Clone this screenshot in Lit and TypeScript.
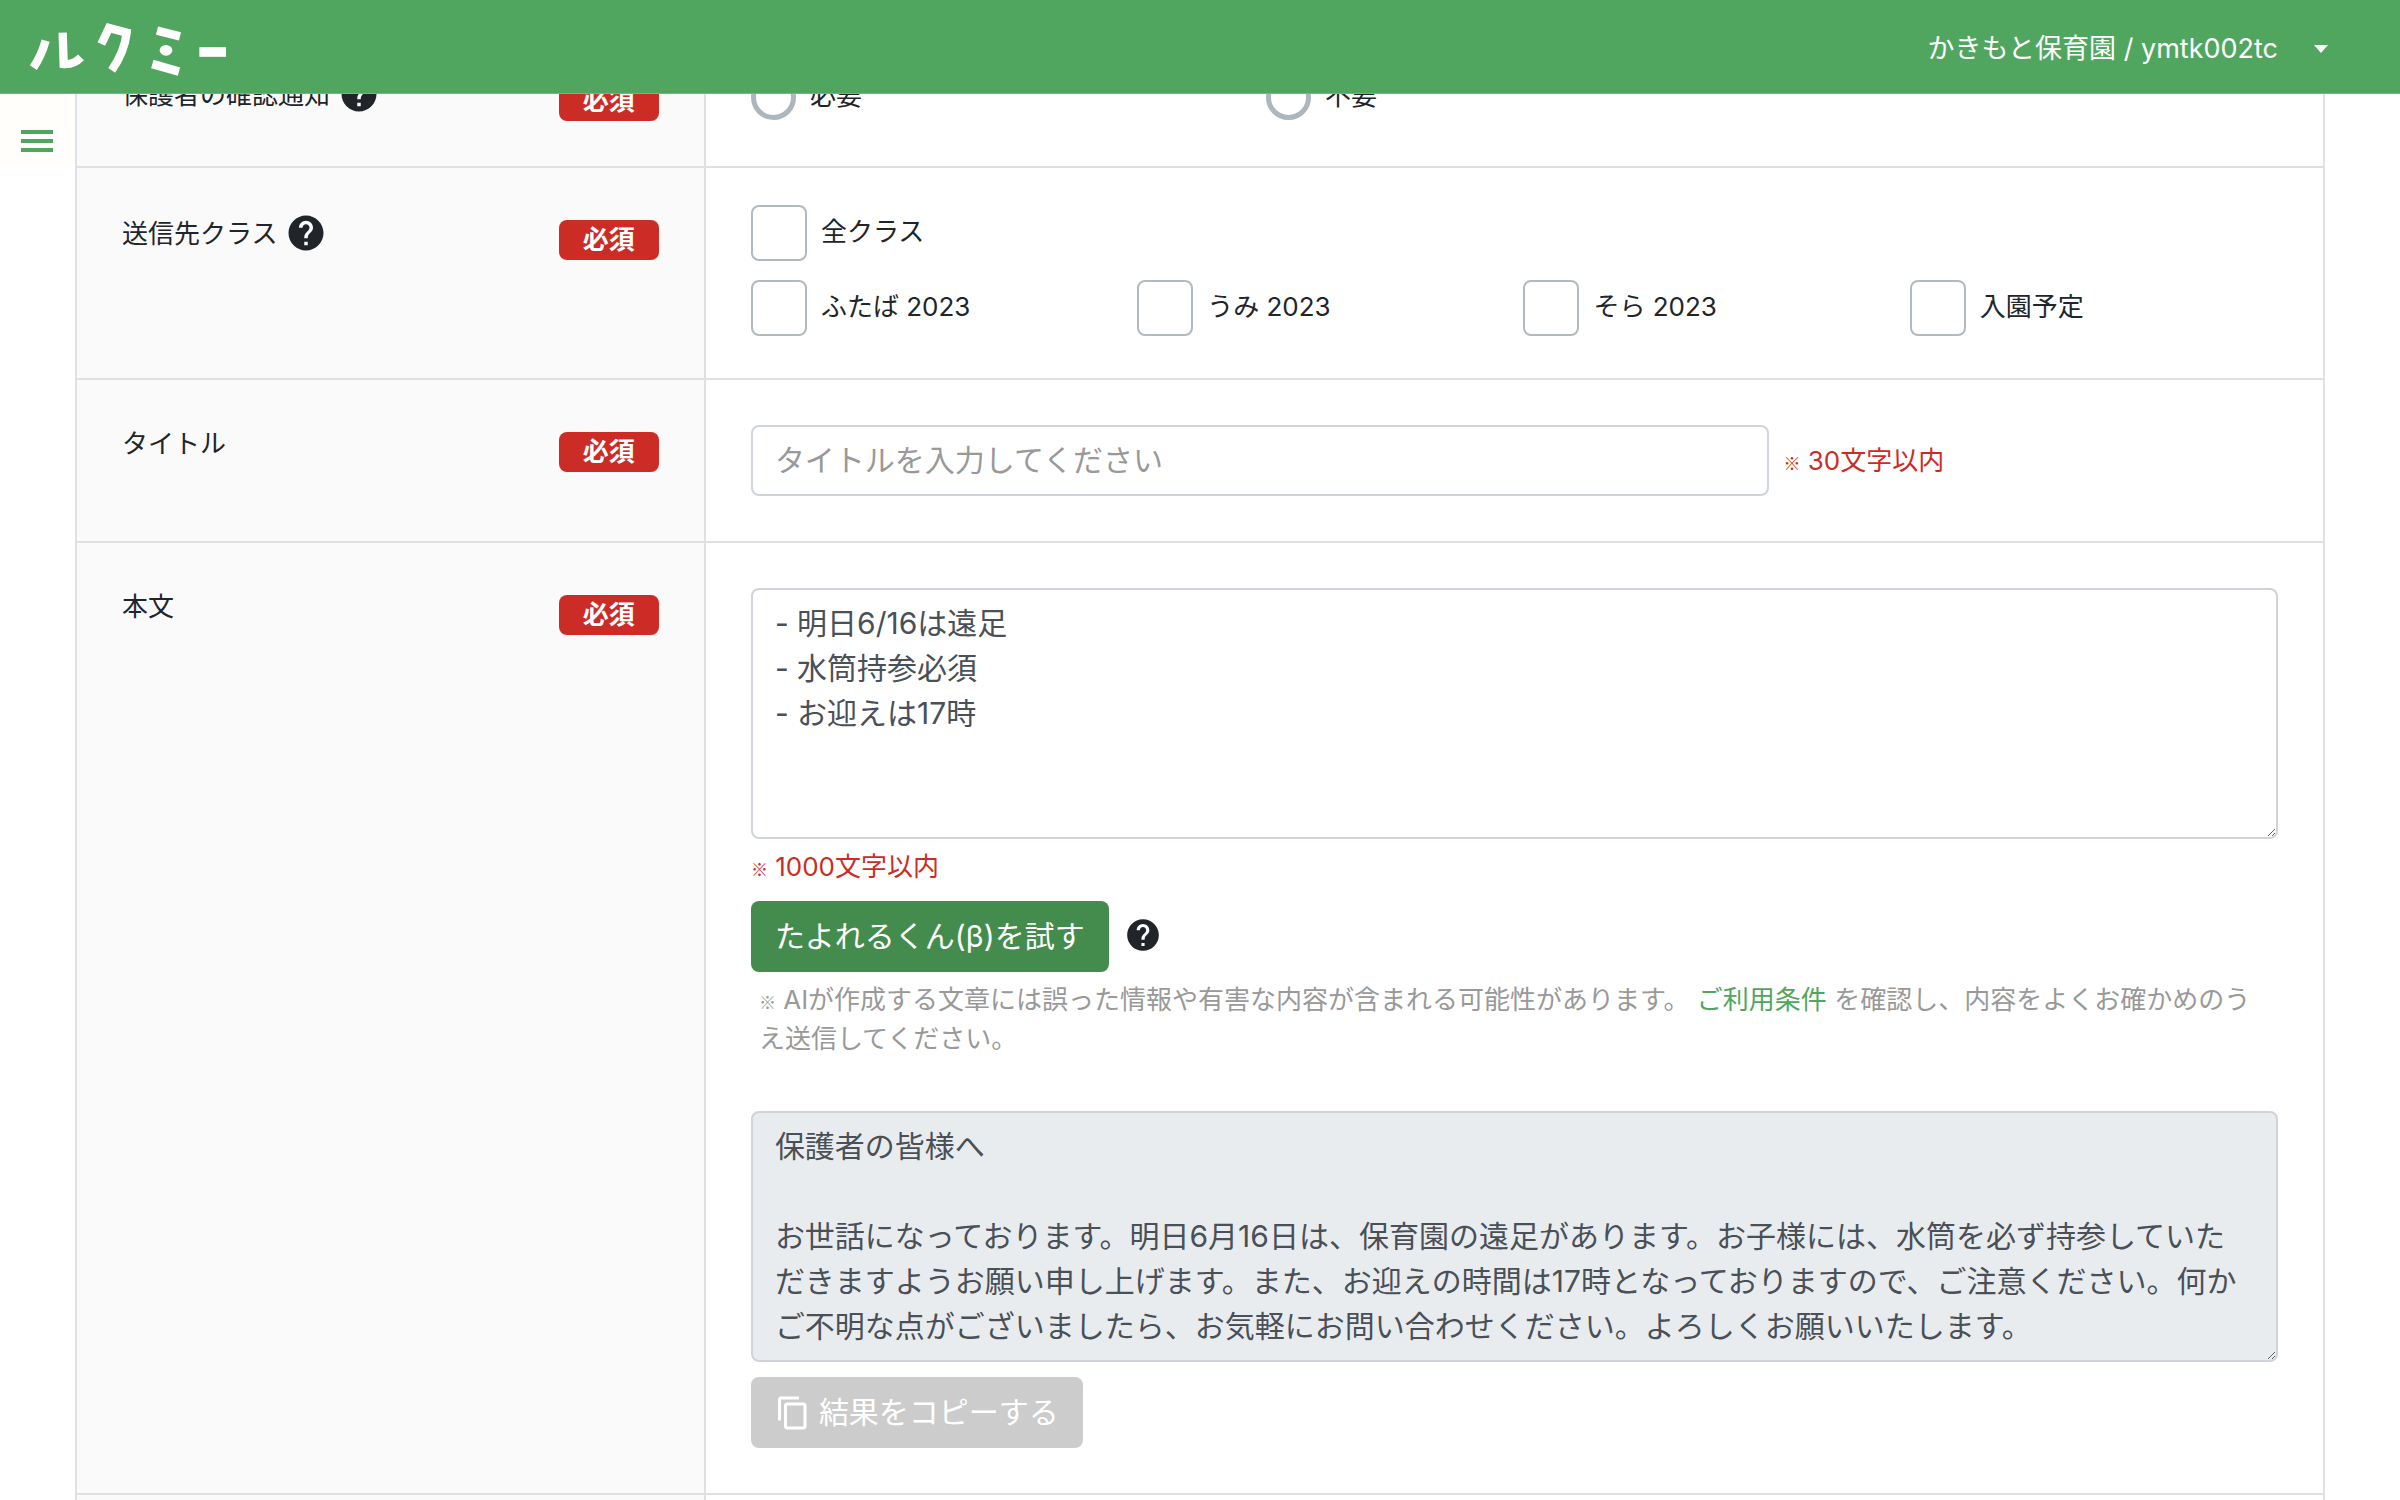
import { LitElement, html, css, svg } from "lit";
import { customElement, property, state } from "lit/decorators.js";

const fontStack = css`Inter, "Noto Sans CJK JP", sans-serif`;

const classes = ["ふたば 2023", "うみ 2023", "そら 2023", "入園予定"];

const memo = "- 明日6/16は遠足\n- 水筒持参必須\n- お迎えは17時";

const letter =
  "保護者の皆様へ\n\nお世話になっております。明日6月16日は、保育園の遠足があります。お子様には、水筒を必ず持参していただきますようお願い申し上げます。また、お迎えの時間は17時となっておりますので、ご注意ください。何かご不明な点がございましたら、お気軽にお問い合わせください。よろしくお願いいたします。";

const helpShape = svg`<path fill="currentColor" d="M12 2C6.48 2 2 6.48 2 12s4.48 10 10 10 10-4.48 10-10S17.52 2 12 2zm1 17h-2v-2h2v2zm2.07-7.75l-.9.92C13.45 12.9 13 13.5 13 15h-2v-.5c0-1.1.45-2.1 1.17-2.83l1.24-1.26c.37-.36.59-.86.59-1.41 0-1.1-.9-2-2-2s-2 .9-2 2H8c0-2.21 1.79-4 4-4s4 1.79 4 4c0 .88-.36 1.68-.93 2.25z"/>`;

const copyShape = svg`<path fill="currentColor" d="M16 1H4c-1.1 0-2 .9-2 2v14h2V3h12V1zm3 4H8c-1.1 0-2 .9-2 2v14c0 1.1.9 2 2 2h11c1.1 0 2-.9 2-2V7c0-1.1-.9-2-2-2zm0 16H8V7h11v14z"/>`;

@customElement("help-button")
export class HelpButton extends LitElement {
  @property({ type: Boolean, reflect: true }) small = false;

  static styles = css`
    :host {
      display: inline-flex;
    }
    .help {
      display: flex;
      padding: 0;
      border: 0;
      background: none;
      color: #212529;
      cursor: pointer;
    }
    .icon {
      width: 42px;
      height: 42px;
    }
    :host([small]) .icon {
      width: 38px;
      height: 38px;
    }
  `;

  render() {
    return html`<button class="help" type="button" aria-label="ヘルプ">
      <svg class="icon" viewBox="0 0 24 24" aria-hidden="true">${helpShape}</svg>
    </button>`;
  }
}

@customElement("app-header")
export class AppHeader extends LitElement {
  static styles = css`
    :host {
      display: block;
      font-family: ${fontStack};
    }
    .bar {
      display: flex;
      align-items: center;
      justify-content: space-between;
      box-sizing: border-box;
      height: 94px;
      padding: 4px 72px 0 20px;
      background: #50a65f;
      border-bottom: 1px solid #72b87e;
    }
    .brand {
      display: flex;
    }
    .logo {
      width: 220px;
      height: 70px;
    }
    .account {
      display: flex;
      align-items: center;
      gap: 36px;
      padding: 0;
      border: 0;
      background: none;
      color: #fff;
      font: 400 27px/40px ${fontStack};
      cursor: pointer;
    }
    .caret {
      width: 14px;
      height: 8px;
    }
  `;

  render() {
    return html`<header class="bar">
      <a class="brand" href="#" aria-label="ルクミー">
        <svg class="logo" viewBox="0 0 660 210" aria-hidden="true">
          <g fill="none" stroke="#fff" stroke-width="25" stroke-linejoin="miter">
            <path d="M77 80Q64 126 40 161" />
            <path d="M128 56L131 150Q160 153 183 130" />
            <path d="M244 90L267 42L320 56Q314 114 275 169" />
            <path stroke-width="26" d="M411 50L480 67M397 150L477 173" />
            <path stroke-width="29" d="M538 114H618" />
          </g>
          <ellipse cx="438" cy="109" rx="19" ry="16" fill="#fff" />
        </svg>
      </a>
      <button class="account" type="button">
        <span>かきもと保育園 / ymtk002tc</span>
        <svg class="caret" viewBox="0 0 14 8" aria-hidden="true">
          <path fill="currentColor" d="M0 0h14L7 8z" />
        </svg>
      </button>
    </header>`;
  }
}

@customElement("app-root")
export class AppRoot extends LitElement {
  @state() private body = memo;

  static styles = css`
    :host {
      display: block;
      font-family: ${fontStack};
      font-size: 26px;
      line-height: 39px;
      color: #212529;
    }
    .app {
      display: flex;
      flex-direction: column;
      height: 100vh;
      background: #fff;
    }
    .scroller {
      flex: 1;
      min-height: 0;
      display: flex;
      align-items: flex-start;
      overflow: hidden;
      padding-right: 75px;
    }
    .side {
      flex: none;
      box-sizing: border-box;
      width: 75px;
      height: 73px;
      padding: 36px 21px 0;
      background: #fffefa;
    }
    .menu {
      display: flex;
      padding: 0;
      border: 0;
      background: none;
      color: #50a65f;
      cursor: pointer;
    }
    .bars {
      width: 32px;
      height: 22px;
    }
    .form {
      flex: 1;
      min-width: 0;
      margin-top: -65px;
      border: 2px solid #dee2e6;
      border-width: 0 2px;
    }
    .row {
      display: grid;
      grid-template-columns: 28% 1fr;
      border-bottom: 2px solid #dee0e1;
    }
    .head {
      display: flex;
      align-items: flex-start;
      justify-content: space-between;
      padding: 44px 45px;
      background: #fafafa;
      border-right: 2px solid #dee0e1;
    }
    .name {
      display: flex;
      align-items: center;
      gap: 8px;
    }
    .badge {
      box-sizing: border-box;
      height: 40px;
      margin-top: 8px;
      padding: 0 24px;
      border-radius: 8px;
      background: #cb2d26;
      color: #fff;
      font-weight: 700;
    }
    .field {
      min-width: 0;
      padding: 45px;
    }
    .field.choices {
      padding: 37px 45px 42px;
    }
    .grid {
      display: grid;
      gap: 19px 18px;
    }
    .thirds {
      grid-template-columns: repeat(3, 1fr);
    }
    .quarters {
      grid-template-columns: repeat(4, 1fr);
    }
    .all {
      grid-column: 1 / -1;
    }
    .option {
      display: flex;
      align-items: center;
      gap: 14px;
      min-height: 47px;
    }
    .option-text {
      padding-bottom: 4px;
    }
    .radio,
    .check {
      appearance: none;
      flex: none;
      box-sizing: border-box;
      margin: 0;
      background: #fff;
    }
    .radio {
      width: 45px;
      height: 45px;
      border: 5px solid #adb5bd;
      border-radius: 50%;
    }
    .radio:checked {
      border-color: #50a65f;
    }
    .check {
      width: 56px;
      height: 56px;
      border: 2px solid #b1b9c1;
      border-radius: 8px;
    }
    .check:checked {
      background: #50a65f;
    }
    .title-line {
      display: flex;
      align-items: center;
      gap: 14px;
    }
    .text,
    .area {
      box-sizing: border-box;
      margin: 0;
      padding: 11px 22px;
      border: 2px solid #ced4da;
      border-radius: 8px;
      background: #fff;
      color: #495057;
      font: 400 30px/45px ${fontStack};
    }
    .text {
      flex: none;
      width: 66.7%;
      height: 71px;
      padding: 10px 22px 12px;
    }
    .text::placeholder {
      color: #999;
      opacity: 1;
    }
    .area {
      display: block;
      width: 100%;
      height: 251px;
      resize: vertical;
      overflow: auto;
      scrollbar-width: none;
    }
    .area.result {
      background: #e9ecef;
    }
    .limit {
      color: #cb2d26;
    }
    .limit.below {
      padding: 8px 0 15px;
    }
    .mark {
      font-family: "Noto Sans CJK JP", sans-serif;
      font-size: 17px;
      font-weight: 700;
      line-height: 1;
    }
    .try-line {
      display: flex;
      align-items: center;
      gap: 15px;
    }
    .try-help {
      padding-bottom: 4px;
    }
    .action {
      display: inline-flex;
      align-items: center;
      gap: 8px;
      height: 71px;
      padding: 0 24px;
      border: 0;
      border-radius: 8px;
      background: #438c4e;
      color: #fff;
      font: 400 30px/45px ${fontStack};
      cursor: pointer;
    }
    .action:disabled {
      background: #ccc;
      cursor: default;
    }
    .copy {
      width: 36px;
      height: 36px;
    }
    .note {
      margin: 8px 0 53px;
      padding: 0 8px;
      color: #999;
    }
    .terms {
      color: #50a65f;
      text-decoration: none;
    }
    .copy-line {
      display: flex;
      margin-top: 15px;
    }
  `;

  private required = html`<span class="badge">必須</span>`;

  private onBody(e: Event) {
    this.body = (e.target as HTMLTextAreaElement).value;
  }

  render() {
    return html`<div class="app">
      <app-header></app-header>
      <div class="scroller">
        <nav class="side">
          <button class="menu" type="button" aria-label="メニュー">
            <svg class="bars" viewBox="0 0 32 22" aria-hidden="true">
              <path fill="currentColor" d="M0 0h32v4H0zM0 9h32v4H0zM0 18h32v4H0z" />
            </svg>
          </button>
        </nav>
        <form class="form">
          <div class="row" role="group" aria-labelledby="confirm-name">
            <div class="head">
              <span class="name"><span id="confirm-name">保護者の確認通知</span><help-button></help-button></span>
              ${this.required}
            </div>
            <div class="field">
              <div class="grid thirds">
                <label class="option"><input class="radio" type="radio" name="confirm" value="1" /><span class="option-text">必要</span></label>
                <label class="option"><input class="radio" type="radio" name="confirm" value="0" /><span class="option-text">不要</span></label>
              </div>
            </div>
          </div>
          <div class="row" role="group" aria-labelledby="class-name">
            <div class="head">
              <span class="name"><span id="class-name">送信先クラス</span><help-button></help-button></span>
              ${this.required}
            </div>
            <div class="field choices">
              <div class="grid quarters">
                <label class="option all"><input class="check" type="checkbox" /><span class="option-text">全クラス</span></label>
                ${classes.map(
                  (name) => html`<label class="option"
                    ><input class="check" type="checkbox" /><span class="option-text">${name}</span></label
                  >`
                )}
              </div>
            </div>
          </div>
          <div class="row">
            <div class="head">
              <label class="name" for="title">タイトル</label>
              ${this.required}
            </div>
            <div class="field title-line">
              <input class="text" id="title" type="text" placeholder="タイトルを入力してください" />
              <span class="limit"><span class="mark">※</span> 30文字以内</span>
            </div>
          </div>
          <div class="row">
            <div class="head">
              <label class="name" for="body">本文</label>
              ${this.required}
            </div>
            <div class="field">
              <textarea class="area" id="body" .value=${this.body} @input=${this.onBody}></textarea>
              <div class="limit below"><span class="mark">※</span> 1000文字以内</div>
              <div class="try-line">
                <button class="action" type="button">たよれるくん(β)を試す</button>
                <help-button class="try-help" small></help-button>
              </div>
              <p class="note">
                <span class="mark">※</span> AIが作成する文章には誤った情報や有害な内容が含まれる可能性があります。
                <a class="terms" href="#">ご利用条件</a> を確認し、内容をよくお確かめのうえ送信してください。
              </p>
              <textarea class="area result" aria-label="結果" readonly .value=${letter}></textarea>
              <div class="copy-line">
                <button class="action" type="button" disabled>
                  <svg class="copy" viewBox="0 0 24 24" aria-hidden="true">${copyShape}</svg>
                  <span>結果をコピーする</span>
                </button>
              </div>
            </div>
          </div>
          <div class="row">
            <div class="head"></div>
            <div class="field"></div>
          </div>
        </form>
      </div>
    </div>`;
  }
}
